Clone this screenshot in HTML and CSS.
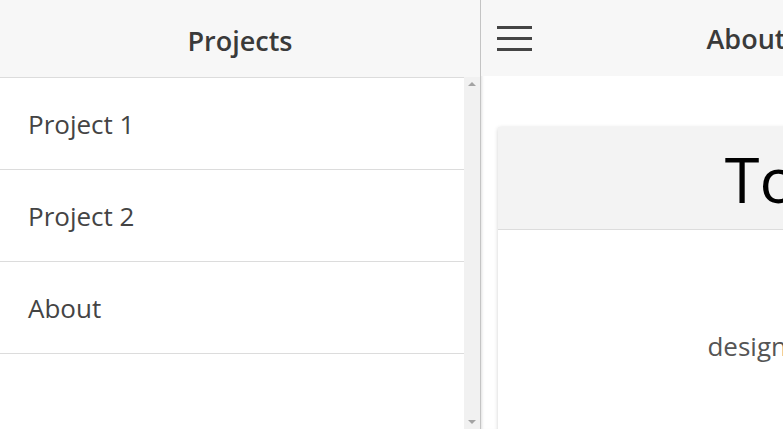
FILE: index.html
```html
<!DOCTYPE html>
<html lang="en">
<head>
  <meta charset="utf-8">
  <title>Projects</title>
  <link rel="stylesheet" href="styles.css">
</head>
<body>
  <div class="split">
    <!-- side menu -->
    <aside class="menu">
      <div class="menu-header">Projects</div>
      <div class="menu-body">
        <ul class="menu-list">
          <li>Project 1</li>
          <li>Project 2</li>
          <li>About</li>
        </ul>
        <div class="scrollbar">
          <span class="arrow up"></span>
          <span class="arrow down"></span>
        </div>
      </div>
    </aside>

    <!-- main page -->
    <main class="page">
      <div class="toolbar">
        <button class="menu-btn" aria-label="menu">
          <svg width="35" height="26" viewBox="0 0 35 26">
            <rect x="0" y="0" width="35" height="3" fill="#444"/>
            <rect x="0" y="11" width="35" height="3" fill="#444"/>
            <rect x="0" y="22" width="35" height="3" fill="#444"/>
          </svg>
        </button>
        <div class="title">About</div>
      </div>
      <div class="content">
        <div class="card">
          <div class="card-header">Tools</div>
          <div class="card-body">
            <p>designed by me</p>
          </div>
        </div>
      </div>
    </main>
  </div>
</body>
</html>
```

FILE: styles.css
```css
html, body {
  margin: 0;
  padding: 0;
  height: 100%;
  overflow: hidden;
}

body {
  font-family: "Open Sans", "Noto Sans", sans-serif;
  color: #444;
  background: #fff;
}

.split {
  display: flex;
  height: 100%;
}

/* side menu */
.menu {
  width: 480px;
  flex-shrink: 0;
  display: flex;
  flex-direction: column;
}

.menu-header {
  height: 77px;
  box-sizing: border-box;
  padding-top: 3px;
  flex-shrink: 0;
  background: #f7f7f7;
  color: #3a3a3a;
  font-size: 27px;
  font-weight: 600;
  display: flex;
  align-items: center;
  justify-content: center;
}

.menu-body {
  flex: 1;
  display: flex;
  min-height: 0;
}

.menu-list {
  flex: 1;
  list-style: none;
  margin: 0;
  padding: 0;
  border-top: 1px solid #dcdcdc;
}

.menu-list li {
  height: 91px;
  border-bottom: 1px solid #dcdcdc;
  padding-left: 28px;
  font-size: 26px;
  color: #444;
  display: flex;
  align-items: center;
}

.scrollbar {
  width: 16px;
  background: #f1f1f1;
  position: relative;
}

.arrow {
  position: absolute;
  left: 4px;
  width: 0;
  height: 0;
  border-left: 4px solid transparent;
  border-right: 4px solid transparent;
}

.arrow.up {
  top: 5px;
  border-bottom: 4px solid #a3a3a3;
}

.arrow.down {
  bottom: 5px;
  border-top: 4px solid #a3a3a3;
}

/* main page */
.page {
  width: 530px;
  flex-shrink: 0;
  min-height: 0;
  overflow: hidden;
  border-left: 1px solid #c4c4c4;
  box-shadow: inset 3px 0 3px -2px rgba(0, 0, 0, 0.12);
  display: flex;
  flex-direction: column;
}

.toolbar {
  height: 76px;
  flex-shrink: 0;
  background: #f7f7f7;
  position: relative;
  display: flex;
  align-items: center;
}

.menu-btn {
  border: none;
  background: none;
  padding: 0 0 0 16px;
  height: 26px;
  margin-top: 1px;
  cursor: pointer;
  position: relative;
  z-index: 1;
}

.menu-btn svg {
  display: block;
}

.title {
  position: absolute;
  left: 0;
  right: 0;
  top: 20px;
  text-align: center;
  font-size: 27px;
  font-weight: 600;
  color: #3a3a3a;
}

.content {
  padding: 51px 17px 0;
}

.card {
  width: 610px;
  background: #fff;
  box-shadow: 0 1px 4px rgba(0, 0, 0, 0.18);
  border-radius: 2px;
  height: 400px;
}

.card-header {
  height: 102px;
  background: #f3f3f3;
  border-bottom: 1px solid #dcdcdc;
  color: #000;
  font-size: 63px;
  font-weight: 500;
  display: flex;
  align-items: center;
  justify-content: center;
}

.card-body {
  text-align: center;
  padding-top: 98px;
}

.card-body p {
  margin: 0;
  font-size: 26px;
  color: #555;
}
```
